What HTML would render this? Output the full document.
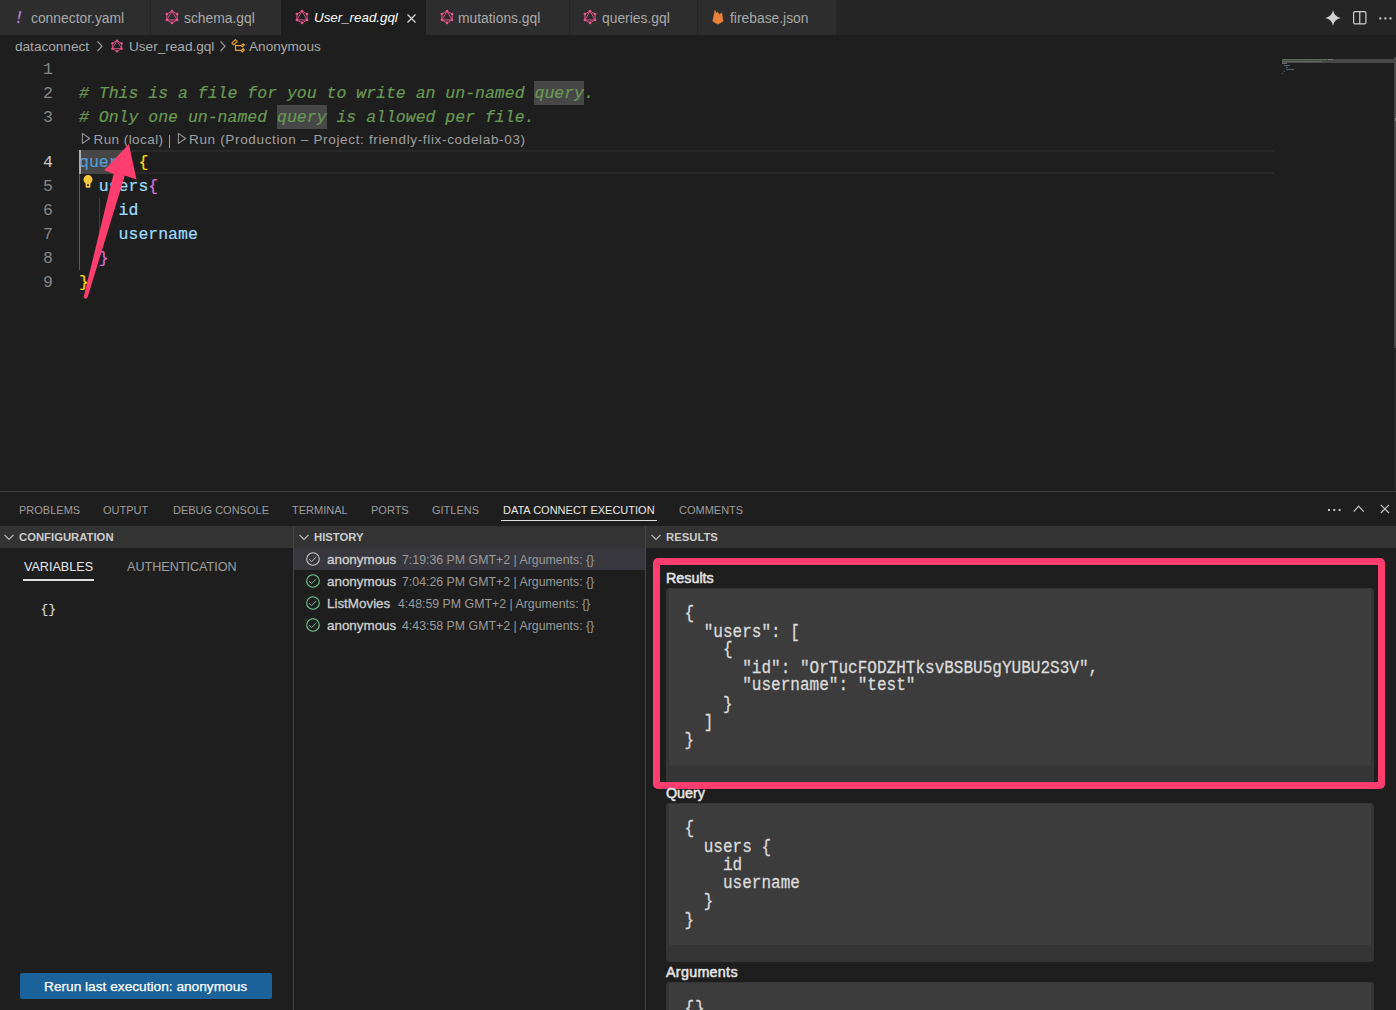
<!DOCTYPE html>
<html><head><meta charset="utf-8">
<style>
*{margin:0;padding:0;box-sizing:border-box}
html,body{width:1396px;height:1010px;overflow:hidden;background:#1e1e1e;-webkit-font-smoothing:antialiased;font-family:"Liberation Sans",sans-serif;color:#ccc}
.a{position:absolute;white-space:pre}
svg{position:absolute;overflow:visible}
#tabs{position:absolute;left:0;top:0;width:1396px;height:35px;background:#252526}
.tab{position:absolute;top:0;height:35px;background:#2d2d2d;font-size:13.85px;color:#a9a9a9}
.tab .t{position:absolute;top:10px;white-space:pre}
.tab.active{background:#1e1e1e;color:#fff}
.crumb{position:absolute;top:39px;font-size:13.6px;color:#a9a9a9;white-space:pre}
.ln{position:absolute;left:0;width:53px;text-align:right;font-family:"Liberation Mono",monospace;font-size:16.5px;color:#6e7681;line-height:24px;color:#858585}
.code{position:absolute;left:79px;font-family:"Liberation Mono",monospace;font-size:16.5px;line-height:24px;white-space:pre;color:#9cdcfe;-webkit-text-stroke:0.2px currentColor}
.cm{color:#6a9955;font-style:italic}
.ptab{position:absolute;top:504px;font-size:11px;color:#9d9d9d;white-space:pre}
.sechdr{position:absolute;top:526px;height:22px;background:#333333}
.sechdr .t{position:absolute;top:5px;font-size:11.3px;font-weight:bold;color:#cccccc;white-space:pre}
.hrow{position:absolute;left:294px;width:351px;height:22px}
.hrow .n{position:absolute;left:33px;top:4px;font-size:13.4px;color:#d0d0d0;-webkit-text-stroke:0.3px #d0d0d0;white-space:pre}
.hrow .d{position:absolute;top:5px;font-size:12.35px;color:#9a9a9a;white-space:pre}
.lbl{position:absolute;left:666px;font-size:14.3px;font-weight:normal;color:#e6e6e6;-webkit-text-stroke:0.5px #e6e6e6;white-space:pre}
.box{position:absolute;left:666px;width:708px;background:#353535;border-radius:4px;overflow:hidden}
.box .in{position:absolute;left:3px;top:1px;right:3px;background:#3c3c3c}
.rc{position:absolute;font-family:"Liberation Mono",monospace;font-size:16.05px;line-height:16.6px;color:#dcdcdc;-webkit-text-stroke:0.25px #dcdcdc;white-space:pre;transform:scale(1,1.09);transform-origin:0 0}
</style></head><body>
<svg width="0" height="0" style="position:absolute">
  <defs>
    <g id="gql">
      <g fill="none" stroke="#e8558c" stroke-width="0.95">
        <polygon points="0,-5.9 5.11,-2.95 5.11,2.95 0,5.9 -5.11,2.95 -5.11,-2.95"/>
        <polygon points="0,-5.9 5.11,2.95 -5.11,2.95"/>
      </g>
      <g fill="#e8558c">
        <circle cx="0" cy="-5.9" r="1.3"/><circle cx="5.11" cy="-2.95" r="1.3"/><circle cx="5.11" cy="2.95" r="1.3"/>
        <circle cx="0" cy="5.9" r="1.3"/><circle cx="-5.11" cy="2.95" r="1.3"/><circle cx="-5.11" cy="-2.95" r="1.3"/>
      </g>
    </g>
    <g id="chk">
      <circle cx="0" cy="0" r="6.3" fill="none" stroke-width="1.1"/>
      <polyline points="-3.9,0.2 -1.4,2.6 3.2,-1.9" fill="none" stroke-width="0.95"/>
    </g>
  </defs>
</svg>

<!-- TABS -->
<div id="tabs">
  <div class="tab" style="left:0;width:150px"><span class="t" style="left:31px">connector.yaml</span></div>
  <div class="tab" style="left:151px;width:130px"><span class="t" style="left:33px">schema.gql</span></div>
  <div class="tab active" style="left:281px;width:145px"><span class="t" style="left:33px;font-style:italic;font-size:13.35px">User_read.gql</span></div>
  <div class="tab" style="left:426px;width:143px"><span class="t" style="left:32px">mutations.gql</span></div>
  <div class="tab" style="left:570px;width:127px"><span class="t" style="left:32px">queries.gql</span></div>
  <div class="tab" style="left:698px;width:138px"><span class="t" style="left:32px">firebase.json</span></div>
</div>
<svg style="left:171.5px;top:17px" width="1" height="1"><use href="#gql"/></svg>
<svg style="left:301.5px;top:17px" width="1" height="1"><use href="#gql"/></svg>
<svg style="left:446.5px;top:17px" width="1" height="1"><use href="#gql"/></svg>
<svg style="left:589.5px;top:17px" width="1" height="1"><use href="#gql"/></svg>
<svg style="left:0;top:0" width="30" height="30"><path d="M19.6,11.3 L21.1,11.6 L19.3,18.9 L18.2,18.9 Z" fill="#b180d7" stroke="#b180d7" stroke-width="0.5" stroke-linejoin="round"/><circle cx="18.3" cy="22" r="1.15" fill="#b180d7"/></svg>
<!-- close x -->
<svg style="left:407px;top:13.5px" width="9" height="9"><path d="M0.5,0.5 L8.5,8.5 M8.5,0.5 L0.5,8.5" stroke="#dcdcdc" stroke-width="1.15"/></svg>
<!-- firebase -->
<svg style="left:0;top:0" width="730" height="30"><path d="M714.9,10.2 L716.4,12.9 L717.6,11.9 L719.5,14.5 L721.8,12.8 L723.2,21.3 L717.9,24.3 L712.7,21.3 Z" fill="#e8803c" stroke="#e8803c" stroke-width="0.4" stroke-linejoin="round"/></svg>
<!-- top right icons -->
<svg style="left:1325px;top:10px" width="16" height="16"><path d="M8,0.2 Q9.3,6.7 15.8,8 Q9.3,9.3 8,15.8 Q6.7,9.3 0.2,8 Q6.7,6.7 8,0.2Z" fill="#d0d0d0"/></svg>
<svg style="left:1353px;top:11px" width="14" height="14"><rect x="0.6" y="0.6" width="12.3" height="12.3" rx="1.5" fill="none" stroke="#d0d0d0" stroke-width="1.2"/><line x1="6.75" y1="0.6" x2="6.75" y2="12.9" stroke="#d0d0d0" stroke-width="1.2"/></svg>
<svg style="left:1378.5px;top:16.8px" width="14" height="4"><rect x="0.3" y="0.4" width="2" height="2" fill="#d0d0d0"/><rect x="5.4" y="0.4" width="2" height="2" fill="#d0d0d0"/><rect x="10.5" y="0.4" width="2" height="2" fill="#d0d0d0"/></svg>

<!-- BREADCRUMBS -->
<span class="crumb" style="left:15px">dataconnect</span>
<svg style="left:97px;top:41px" width="6" height="11"><polyline points="0.5,0.5 5,5.2 0.5,10" fill="none" stroke="#a0a0a0" stroke-width="1.1"/></svg>
<svg style="left:116.8px;top:46.1px" width="1" height="1"><use href="#gql" transform="scale(0.9)"/></svg>
<span class="crumb" style="left:129px">User_read.gql</span>
<svg style="left:220px;top:41px" width="6" height="11"><polyline points="0.5,0.5 5,5.2 0.5,10" fill="none" stroke="#a0a0a0" stroke-width="1.1"/></svg>
<svg style="left:0;top:0" width="260" height="60"><g fill="none" stroke="#ee9d28" stroke-width="1.15" stroke-linejoin="round">
<polygon points="231.8,43.2 235.4,39.7 237.3,41.6 233.6,44.9"/>
<polyline points="235.5,44.6 235.5,50.3 241,50.3"/><line x1="235.5" y1="45.6" x2="241.2" y2="45.6"/>
<polygon points="241.3,45.6 243.2,43.8 244.4,44.9 242.4,46.8"/>
<polygon points="241.3,50.5 243.3,48.7 244.4,49.8 242.3,52"/>
</g></svg>
<span class="crumb" style="left:249px">Anonymous</span>

<!-- EDITOR -->
<!-- current line highlight -->
<div class="a" style="left:79px;top:150px;width:1195px;height:24px;border-top:2px solid #282828;border-bottom:2px solid #282828"></div>
<div class="a" style="left:79px;top:150px;width:49.5px;height:24px;background:#464646"></div>
<div class="a" style="left:79px;top:150px;width:2px;height:24px;background:#aeafad"></div>
<!-- find highlights -->
<div class="a" style="left:534.4px;top:81px;width:49.5px;height:24px;background:#474747"></div>
<div class="a" style="left:277px;top:105px;width:49.5px;height:24px;background:#474747"></div>
<!-- indent guides -->
<div class="a" style="left:79px;top:174px;width:1px;height:96px;background:#5a5a5a"></div>
<div class="a" style="left:99px;top:198px;width:1px;height:48px;background:#404040"></div>

<div class="ln" style="top:58px">1</div>
<div class="ln" style="top:82px">2</div>
<div class="ln" style="top:106px">3</div>
<div class="ln" style="top:151px;color:#cccccc">4</div>
<div class="ln" style="top:175px">5</div>
<div class="ln" style="top:199px">6</div>
<div class="ln" style="top:223px">7</div>
<div class="ln" style="top:247px">8</div>
<div class="ln" style="top:271px">9</div>
<div class="code" style="top:82px"><span class="cm"># This is a file for you to write an un-named query.</span></div>
<div class="code" style="top:106px"><span class="cm"># Only one un-named query is allowed per file.</span></div>
<svg style="left:81px;top:132px" width="10" height="13"><path d="M1.4,1.4 L8.7,6.5 L1.4,11.4 Z" fill="none" stroke="#999" stroke-width="1.05" stroke-linejoin="round"/></svg>
<span class="a" style="left:93.5px;top:132px;font-size:13.5px;color:#a0a0a0;letter-spacing:0.43px">Run (local)</span>
<div class="a" style="left:169px;top:135px;width:1.1px;height:12.5px;background:#999"></div>
<svg style="left:177px;top:132px" width="10" height="13"><path d="M1.4,1.4 L8.7,6.5 L1.4,11.4 Z" fill="none" stroke="#999" stroke-width="1.05" stroke-linejoin="round"/></svg>
<span class="a" style="left:189px;top:132px;font-size:13.5px;color:#a0a0a0;letter-spacing:0.66px">Run (Production – Project: friendly-flix-codelab-03)</span>
<div class="code" style="top:151px"><span style="color:#569cd6">query</span> <span style="color:#ffd700">{</span></div>
<div class="code" style="top:175px">  users<span style="color:#da70d6">{</span></div>
<div class="code" style="top:199px">    id</div>
<div class="code" style="top:223px">    username</div>
<div class="code" style="top:247px">  <span style="color:#da70d6">}</span></div>
<div class="code" style="top:271px"><span style="color:#ffd700">}</span></div>
<!-- lightbulb -->
<svg style="left:82.6px;top:175px" width="11" height="14"><circle cx="5" cy="4.6" r="4.5" fill="#f9c83c"/><rect x="2.6" y="7" width="4.8" height="5.8" rx="1.2" fill="#f9c83c"/><ellipse cx="5" cy="10.2" rx="0.9" ry="1.1" fill="#1e1e1e"/></svg>

<!-- minimap -->
<div class="a" style="left:1282px;top:59px;width:112px;height:4px;background:#484848"></div>
<div class="a" style="left:1282px;top:59px;width:45px;height:1px;background:#5d6b57"></div>
<div class="a" style="left:1328px;top:59px;width:5px;height:1px;background:#7a7a7a"></div>
<div class="a" style="left:1282px;top:61px;width:40px;height:1px;background:#5d6b57"></div>
<div class="a" style="left:1302px;top:61px;width:5px;height:1px;background:#6a6a6a"></div>
<div class="a" style="left:1282px;top:63px;width:5px;height:1px;background:#6b6b6b"></div>
<div class="a" style="left:1284px;top:65px;width:6px;height:1px;background:#4f6474"></div>
<div class="a" style="left:1286px;top:67px;width:2px;height:1px;background:#4f6474"></div>
<div class="a" style="left:1286px;top:69px;width:8px;height:1px;background:#4f6474"></div>
<div class="a" style="left:1284px;top:71px;width:1px;height:1px;background:#5a5a5a"></div>
<div class="a" style="left:1282px;top:73px;width:1px;height:1px;background:#5a5a5a"></div>
<div class="a" style="left:1394px;top:57px;width:2px;height:434px;background:#272727"></div>
<div class="a" style="left:1394px;top:57px;width:2px;height:291px;background:#474747"></div>
<div class="a" style="left:1395px;top:118px;width:1px;height:3px;background:#8a8a8a"></div>

<!-- PANEL -->
<div class="a" style="left:0;top:491px;width:1396px;height:1px;background:#3c3c3c"></div>
<span class="ptab" style="left:19px">PROBLEMS</span>
<span class="ptab" style="left:103px">OUTPUT</span>
<span class="ptab" style="left:173px">DEBUG CONSOLE</span>
<span class="ptab" style="left:292px">TERMINAL</span>
<span class="ptab" style="left:371px">PORTS</span>
<span class="ptab" style="left:432px">GITLENS</span>
<span class="ptab" style="left:503px;color:#e7e7e7">DATA CONNECT EXECUTION</span>
<span class="ptab" style="left:679px">COMMENTS</span>
<div class="a" style="left:501px;top:520px;width:156px;height:1px;background:#e0e0e0"></div>
<svg style="left:1328px;top:509px" width="13" height="3"><rect x="0" y="0" width="2" height="2" fill="#c5c5c5"/><rect x="5.3" y="0" width="2" height="2" fill="#c5c5c5"/><rect x="10.6" y="0" width="2" height="2" fill="#c5c5c5"/></svg>
<svg style="left:1353px;top:505px" width="12" height="8"><polyline points="0.7,6.7 5.6,1.2 10.7,6.7" fill="none" stroke="#c5c5c5" stroke-width="1.2"/></svg>
<svg style="left:1380px;top:504px" width="10" height="10"><path d="M0.8,0.8 L9,9 M9,0.8 L0.8,9" stroke="#c5c5c5" stroke-width="1.2"/></svg>

<div class="sechdr" style="left:0;width:293px"><span class="t" style="left:19px">CONFIGURATION</span></div>
<div class="sechdr" style="left:294px;width:351px"><span class="t" style="left:20px">HISTORY</span></div>
<div class="sechdr" style="left:646px;width:750px"><span class="t" style="left:20px">RESULTS</span></div>
<svg style="left:4px;top:534px" width="11" height="7"><polyline points="0.5,0.8 5,5.5 9.5,0.8" fill="none" stroke="#c5c5c5" stroke-width="1.1"/></svg>
<svg style="left:299px;top:534px" width="11" height="7"><polyline points="0.5,0.8 5,5.5 9.5,0.8" fill="none" stroke="#c5c5c5" stroke-width="1.1"/></svg>
<svg style="left:651px;top:534px" width="11" height="7"><polyline points="0.5,0.8 5,5.5 9.5,0.8" fill="none" stroke="#c5c5c5" stroke-width="1.1"/></svg>
<!-- splitters -->
<div class="a" style="left:293px;top:526px;width:1px;height:484px;background:#444444"></div>
<div class="a" style="left:645px;top:526px;width:1px;height:484px;background:#444444"></div>

<!-- config -->
<span class="a" style="left:24px;top:560px;font-size:12.6px;color:#e8e8e8">VARIABLES</span>
<span class="a" style="left:127px;top:560px;font-size:12.6px;color:#a0a0a0">AUTHENTICATION</span>
<div class="a" style="left:23px;top:579px;width:71px;height:2px;background:#e0e0e0"></div>
<span class="a mono" style="left:40.5px;top:601.5px;font-family:'Liberation Mono',monospace;font-size:13px;color:#d4d4d4;-webkit-text-stroke:0.2px #d4d4d4">{}</span>
<div class="a" style="left:20px;top:973px;width:252px;height:26px;background:#1b629b;border-radius:2px"></div>
<span class="a" style="left:44px;top:979px;font-size:13.7px;color:#ffffff;-webkit-text-stroke:0.25px #fff">Rerun last execution: anonymous</span>

<!-- history -->
<div class="hrow" style="top:548px;background:#37373d"></div>
<div class="hrow" style="top:548px"><span class="n">anonymous</span><span class="d" style="left:108px">7:19:36 PM GMT+2 | Arguments: {}</span></div>
<div class="hrow" style="top:570px"><span class="n">anonymous</span><span class="d" style="left:108px">7:04:26 PM GMT+2 | Arguments: {}</span></div>
<div class="hrow" style="top:592px"><span class="n">ListMovies</span><span class="d" style="left:104px">4:48:59 PM GMT+2 | Arguments: {}</span></div>
<div class="hrow" style="top:614px"><span class="n">anonymous</span><span class="d" style="left:108px">4:43:58 PM GMT+2 | Arguments: {}</span></div>
<svg style="left:313px;top:559px" width="1" height="1"><use href="#chk" stroke="#c8c8c8"/></svg>
<svg style="left:313px;top:581px" width="1" height="1"><use href="#chk" stroke="#73c991"/></svg>
<svg style="left:313px;top:603px" width="1" height="1"><use href="#chk" stroke="#73c991"/></svg>
<svg style="left:313px;top:625px" width="1" height="1"><use href="#chk" stroke="#73c991"/></svg>

<!-- results -->
<span class="lbl" style="top:569.5px">Results</span>
<div class="box" style="top:588px;height:198px"><div class="in" style="height:177px"></div></div>
<div class="rc" style="left:684.5px;top:605px">{
  "users": [
    {
      "id": "OrTucFODZHTksvBSBU5gYUBU2S3V",
      "username": "test"
    }
  ]
}</div>
<div class="a" style="left:653px;top:558px;width:732px;height:231px;border:7px solid #ff3d6e;border-radius:5px"></div>

<span class="lbl" style="top:784.5px">Query</span>
<div class="box" style="top:803px;height:159px"><div class="in" style="height:141px"></div></div>
<div class="rc" style="left:684.5px;top:819.5px;line-height:16.8px">{
  users {
    id
    username
  }
}</div>
<span class="lbl" style="top:963.5px;letter-spacing:0.3px">Arguments</span>
<div class="box" style="top:982px;height:40px"><div class="in" style="height:40px"></div></div>
<div class="rc" style="left:684.5px;top:999.5px;letter-spacing:1px">{}</div>

<!-- arrow annotation -->
<svg style="left:0;top:0" width="1396" height="1010"><path d="M128.9,144 L136.5,179.5 L124.8,175.5 L87.7,297 Q85.8,300.2 83.6,297.2 L113.6,173.8 L104.2,170.2 Z" fill="#ff3d6e"/></svg>
</body></html>
